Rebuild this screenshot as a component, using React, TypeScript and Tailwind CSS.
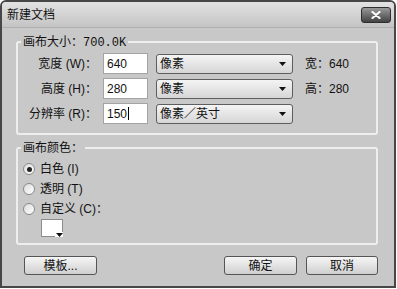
import React from 'react';

const font = { fontFamily: '"Liberation Sans", "Noto Sans CJK SC", sans-serif' };

function Arrow() {
  return (
    <svg width="7" height="4" viewBox="0 0 7 4" className="block">
      <path d="M0 0h7L3.5 4z" fill="#111" />
    </svg>
  );
}

function Select({ label }: { label: string }) {
  return (
    <div className="flex h-[20px] w-[137px] items-center justify-between rounded-[3px] border border-[#5e5e5e] bg-gradient-to-b from-[#f4f4f4] to-[#d6d6d6] pl-[3px] pr-[6px] text-[12px] text-[#111]">
      <span>{label}</span>
      <Arrow />
    </div>
  );
}

function Row({ label, value, unit, extra, caret }: { label: string; value: string; unit: string; extra?: string; caret?: boolean }) {
  return (
    <div className="flex h-[21px] items-center">
      <div className="w-[79px] text-right text-[12px] text-[#111]">{label}</div>
      <div className="ml-[6px] flex h-[21px] w-[45px] items-center border border-[#a4a4a4] bg-white pl-[3px] text-[12px] text-[#111]">
        {value}
        {caret && <span className="ml-[1px] h-[13px] w-px bg-black" />}
      </div>
      <div className="ml-[8px]">
        <Select label={unit} />
      </div>
      {extra && <div className="ml-[12px] text-[12px] text-[#111]">{extra}</div>}
    </div>
  );
}

function Radio({ label, checked }: { label: string; checked?: boolean }) {
  return (
    <div className="flex h-[20px] items-center">
      <div className="ml-[5px] flex h-[12px] w-[12px] items-center justify-center rounded-full border border-[#8a8a8a] bg-gradient-to-br from-[#dcdcdc] to-[#ffffff]">
        {checked && <div className="h-[5px] w-[5px] rounded-full bg-[#222]" />}
      </div>
      <span className="ml-[5px] text-[12px] text-[#111]">{label}</span>
    </div>
  );
}

function Button({ label, w }: { label: string; w: string }) {
  return (
    <button className={`flex h-[19px] ${w} items-center justify-center rounded-[3px] border border-[#555] bg-gradient-to-b from-[#f6f6f6] to-[#cfcfcf] text-[12px] text-[#111]`}>
      {label}
    </button>
  );
}

export default function App() {
  return (
    <div className="h-[289px] w-[397px] bg-white" style={font}>
      <div className="flex h-[288px] w-[396px] flex-col rounded-t-[6px] border-2 border-[#474747] bg-[#c8c8c8]">
        <div className="flex h-[26px] items-center justify-between rounded-t-[4px] border-b border-[#b0b0b0] bg-gradient-to-b from-[#e2e2e2] to-[#c4c4c4] pl-[5px] pr-[3px]">
          <span className="text-[12px] text-[#111]">新建文档</span>
          <div className="flex h-[16px] w-[30px] items-center justify-center rounded-[3px] border border-[#2e2e2e] bg-gradient-to-b from-[#9a9a9a] to-[#444]">
            <svg width="10" height="8" viewBox="0 0 10 8">
              <path d="M1.5 1l7 6M8.5 1l-7 6" stroke="#fff" strokeWidth="2.2" strokeLinecap="round" />
            </svg>
          </div>
        </div>

        <div className="relative ml-[14px] mt-[13px] w-[362px] rounded-[3px] border-2 border-[#eeeeee] pb-[9px] pt-[10px]">
          <span className="absolute -top-[9px] left-[3px] bg-[#c8c8c8] px-[2px] text-[12px] leading-[16px] text-[#111]">
            画布大小：<span style={{ fontFamily: '"Liberation Mono", monospace' }} className="text-[12px]">700.0K</span>
          </span>
          <div className="flex flex-col gap-[4px]">
            <Row label="宽度 (W)：" value="640" unit="像素" extra="宽：640" />
            <Row label="高度 (H)：" value="280" unit="像素" extra="高：280" />
            <Row label="分辨率 (R)：" value="150" unit="像素／英寸" caret />
          </div>
        </div>

        <div className="relative ml-[14px] mt-[12px] w-[362px] rounded-[3px] border-2 border-[#eeeeee] pb-[6px] pt-[10px]">
          <span className="absolute -top-[9px] left-[3px] bg-[#c8c8c8] px-[2px] text-[12px] leading-[16px] text-[#111]">
            画布颜色：
          </span>
          <Radio label="白色 (I)" checked />
          <Radio label="透明 (T)" />
          <Radio label="自定义 (C)：" />
          <div className="relative ml-[23px] h-[18px] w-[22px] border border-[#8c8c8c] bg-white">
            <div className="absolute -bottom-[1px] -right-[1px] bg-white pl-[1px] pt-[1px]">
              <Arrow />
            </div>
          </div>
        </div>

        <div className="ml-[22px] mt-[11px] flex w-[354px] items-center">
          <Button label="模板..." w="w-[73px]" />
          <div className="flex-1" />
          <Button label="确定" w="w-[73px]" />
          <div className="ml-[9px]">
            <Button label="取消" w="w-[72px]" />
          </div>
        </div>
      </div>
    </div>
  );
}
